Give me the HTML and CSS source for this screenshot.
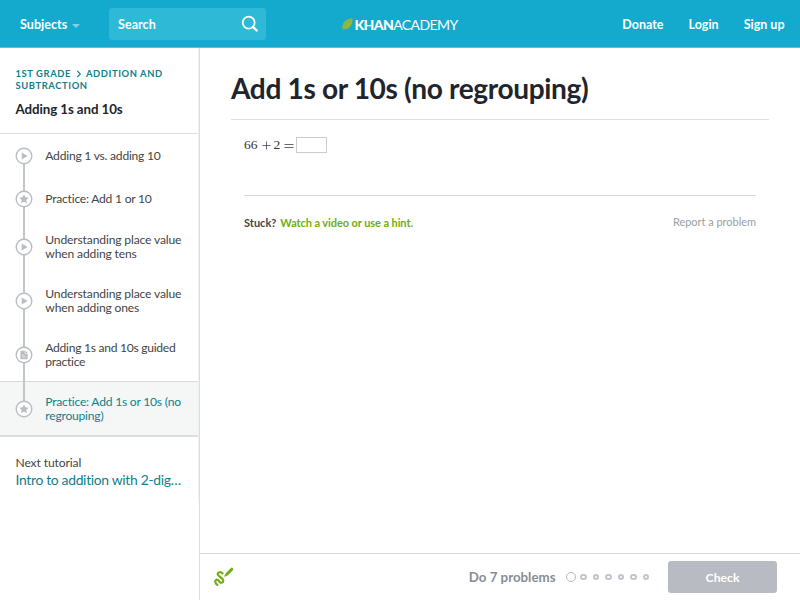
FILE: index.html
```html
<!DOCTYPE html>
<html lang="en">
<head>
<meta charset="utf-8">
<title>Add 1s or 10s (no regrouping)</title>
<link rel="stylesheet" href="styles.css">
</head>
<body>
<svg class="defs" aria-hidden="true">
  <symbol id="play" viewBox="0 0 18 18"><circle cx="9" cy="9" r="7.8" fill="#fff" stroke="#babec2" stroke-width="1.4"/><path d="M6.700 5.600v6.800L12.600 9z" fill="#babec2"/></symbol>
  <symbol id="star" viewBox="0 0 18 18"><circle cx="9" cy="9" r="7.8" fill="#fff" stroke="#babec2" stroke-width="1.4"/><path d="M9 4.300l1.450 2.950 3.250.45-2.400 2.250.6 3.250L9 11.700l-2.900 1.500.6-3.250L4.300 7.700l3.250-.45z" fill="#babec2"/></symbol>
  <symbol id="doc" viewBox="0 0 18 18"><circle cx="9" cy="9" r="7.8" fill="#fff" stroke="#babec2" stroke-width="1.4"/><path d="M6.200 4.800h3.600v2.800h2.900v4.900q0 .8-.8.8H6.200q-.8 0-.8-.8V5.600q0-.8.8-.8zM10.400 4.800l2.300 2.300h-2.300z" fill="#babec2"/><path d="M7 9.200h2.500M7 11h4" stroke="#fff" stroke-width=".6"/></symbol>
</svg>
<header class="topbar">
  <div class="left">
    <a class="subjects">Subjects<i class="caret"></i></a>
    <div class="search"><span>Search</span>
      <svg width="18" height="18" viewBox="0 0 18 18" fill="none" stroke="#fff"><circle cx="7.7" cy="7.6" r="6" stroke-width="1.7"/><path d="M12.2 12.2l3.5 3.3" stroke-width="2.3" stroke-linecap="round"/></svg>
    </div>
  </div>
  <div class="logo">
    <svg width="11" height="12" viewBox="0 0 11 12"><path d="M.8 11.2C-.6 5.4 3.2 1 10.4.5 10.8 7.600 7.200 11.800.8 11.200z" fill="#9bb53c"/><path d="M.8 11.200L10.400.5C4.500 1.200-.6 5.400.8 11.200z" fill="#83b944"/></svg>
    <b>KHAN</b><span>ACADEMY</span>
  </div>
  <nav class="links"><a>Donate</a><a>Login</a><a>Sign up</a></nav>
</header>
<div class="page">
  <aside class="sidebar">
    <div class="side-inner">
      <div class="heading">
        <div class="crumbs"><div>1ST GRADE<svg width="6" height="8" viewBox="0 0 6 8"><path d="M1.300 1l3 3-3 3" fill="none" stroke="#11808b" stroke-width="1.100"/></svg>ADDITION AND</div><div>SUBTRACTION</div></div>
        <h2>Adding 1s and 10s</h2>
      </div>
      <ul class="lessons">
        <li class="single"><svg><use href="#play"/></svg><span>Adding 1 vs. adding 10</span></li>
        <li class="single"><svg><use href="#star"/></svg><span>Practice: Add 1 or 10</span></li>
        <li><svg><use href="#play"/></svg><span>Understanding place value<br>when adding tens</span></li>
        <li><svg><use href="#play"/></svg><span>Understanding place value<br>when adding ones</span></li>
        <li class="guided"><svg><use href="#doc"/></svg><span>Adding 1s and 10s guided<br>practice</span></li>
        <li class="current"><svg><use href="#star"/></svg><span>Practice: Add 1s or 10s (no<br>regrouping)</span></li>
      </ul>
      <div class="next"><div>Next tutorial</div><a>Intro to addition with 2-dig…</a></div>
    </div>
  </aside>
  <main class="main">
    <div class="content">
      <h1>Add 1s or 10s (no regrouping)</h1>
      <div class="exercise">
        <div class="problem"><span>66</span><svg width="9" height="9" viewBox="0 0 9 9"><path d="M4.500.5v8M.5 4.500h8" stroke="#444" stroke-width=".8"/></svg><span>2</span><svg class="equals" width="10" height="9" viewBox="0 0 10 9"><path d="M.5 3.500h9M.5 6.500h9" stroke="#444" stroke-width=".8"/></svg><input type="text" aria-label="Answer"></div>
        <div class="help"><div class="stuck"><b>Stuck?</b><a>Watch a video or use a hint.</a></div><a class="report">Report a problem</a></div>
      </div>
    </div>
    <footer class="taskbar">
      <svg class="scratch" width="20" height="20" viewBox="0 0 20 20" fill="none" stroke="#71ac13" stroke-linecap="round" stroke-linejoin="round"><path d="M8.400 6.400C7 4.300 3.500 5 3.700 7.400 3.900 9.500 9.200 10.800 9.300 13.500 9.300 15.600 7.200 16.400 5.800 15.100 4.700 14 4.300 12.200 2.500 12.700.4 13.500 1.200 16.500 3.300 17.900" stroke-width="2.200"/><path d="M12.800 7.200l5-5" stroke-width="3"/><path d="M11 9l.9-.9" stroke-width="1.500"/></svg>
      <div class="progress"><span>Do 7 problems</span><i class="first"></i><i></i><i></i><i></i><i></i><i></i><i></i></div>
      <button>Check</button>
    </footer>
  </main>
</div>
</body>
</html>
```
FILE: styles.css
```css
* { box-sizing: border-box; }
body { margin: 0; width: 800px; height: 600px; overflow: hidden; display: flex; flex-direction: column; background: #fff; color: #444; font-family: Lato, "Liberation Sans", sans-serif; font-size: 12.5px; font-variant-ligatures: none; }
.defs { position: absolute; width: 0; height: 0; }
.topbar { height: 48px; flex: none; display: grid; grid-template-columns: 1fr auto 1fr; align-items: center; background: #14aace; border-bottom: 1px solid #55c3dc; color: #fff; font-weight: 700; font-size: 12.5px; }
.left { display: flex; align-items: center; padding-left: 20px; }
.subjects { width: 89px; display: flex; align-items: center; padding-top: 2px; letter-spacing: .06px; }
.caret { margin: 3px 0 0 5px; border: 4px solid transparent; border-top-color: #81d1e5; border-bottom: 0; }
.search { width: 157px; height: 32px; border-radius: 3px; background: #2eb9d7; display: flex; align-items: center; justify-content: space-between; padding: 0 7px 0 9px; letter-spacing: .06px; }
.search span { padding-top: 2px; }
.logo { display: flex; align-items: center; font-size: 14px; letter-spacing: -.6px; padding-top: 1px; }
.logo b { font-weight: 900; margin-left: 1px; }
.logo span { font-weight: 400; }
.links { display: flex; justify-content: flex-end; gap: 25px; padding: 2px 15.500px 0 0; }
.page { flex: 1; display: flex; min-height: 0; }
.sidebar { width: 200px; border-right: 1px solid #dcddde; }
.side-inner { height: 451px; border-right: 1px solid #eff0f0; }
.heading { height: 86px; padding: 19.500px 15px 0 15.500px; border-bottom: 1px solid #dddedf; }
.crumbs { color: #11808b; font-size: 9.400px; font-weight: 700; line-height: 12px; letter-spacing: .6px; white-space: nowrap; }
.crumbs svg { margin: 0 4px 0 5px; vertical-align: -1px; }
.sidebar h2 { margin: 9px 0 0; color: #21242c; font-size: 13.300px; line-height: 16px; font-weight: 700; letter-spacing: -.08px; }
.lessons { margin: 0; padding: 0; list-style: none; }
.lessons li { position: relative; height: 54px; padding-left: 15px; display: flex; align-items: center; line-height: 14px; font-size: 12.100px; letter-spacing: -.15px; white-space: nowrap; }
.lessons .single { height: 43px; letter-spacing: -.23px; }
.lessons .guided { letter-spacing: -.28px; }
.lessons svg { position: relative; width: 18px; height: 18px; flex: none; margin-right: 12.300px; }
.lessons li::before { content: ""; position: absolute; left: 23px; top: 0; bottom: 0; width: 2px; background: #c2c5c9; }
.lessons li:first-child::before { top: 50%; }
.lessons .current { height: 56px; margin-top: -1px; background: #f5f7f7; border-top: 1px solid #d8dada; border-bottom: 2px solid #dcdddd; color: #11808b; letter-spacing: -.22px; }
.lessons .current::before { top: -2px; bottom: 50%; }
.next { padding: 18px 0 0 15.500px; line-height: 16px; }
.next div { font-size: 12.100px; letter-spacing: -.12px; }
.next a { display: block; color: #11808b; font-size: 13.900px; line-height: 17px; letter-spacing: -.32px; white-space: nowrap; }
.main { flex: 1; display: flex; flex-direction: column; }
.content { flex: 1; padding: 0 31px; }
h1 { margin: 0; height: 72px; padding-top: 23px; border-bottom: 1px solid #dedfe0; color: #21242c; font-size: 28.100px; line-height: 34px; font-weight: 700; letter-spacing: -.36px; white-space: nowrap; }
.exercise { padding: 0 13px; }
.problem { height: 76px; padding-top: 17px; border-bottom: 1px solid #d6d8da; display: flex; align-items: flex-start; color: #333; font-family: "Liberation Serif", serif; font-size: 13.500px; line-height: 16px; }
.problem svg { margin: 4px 3px 0 4px; }
.problem .equals { margin-right: 2px; }
.problem input { width: 31px; height: 16px; margin: 0; padding: 0; border: 1px solid #ccc; background: #fff; }
.help { display: flex; justify-content: space-between; margin-top: 19px; font-size: 11px; line-height: 16px; }
.stuck a { color: #71ac13; font-weight: 700; margin-left: 4px; letter-spacing: -.08px; }
.report { color: #9a9ea3; position: relative; top: -1px; letter-spacing: -.03px; }
.taskbar { height: 47px; border-top: 1px solid #d6d8da; display: flex; align-items: center; padding: 0 23px 0 13px; }
.scratch { margin-left: .5px; }
.progress { margin-left: auto; display: flex; align-items: center; color: #888d93; font-size: 13.300px; font-weight: 700; }
.progress i { width: 6.500px; height: 6.500px; border: 2px solid #c2c5c9; border-radius: 50%; margin-right: 6px; }
.progress .first { width: 10px; height: 10px; border: 1px solid #b4b8bc; margin: 0 4px 0 10.500px; }
button { width: 109px; height: 32px; margin-left: 13px; padding: 1px 0 0; border: 0; border-radius: 3px; background: #b8bbc1; color: #fff; font: 700 12.200px Lato, sans-serif; }
```
